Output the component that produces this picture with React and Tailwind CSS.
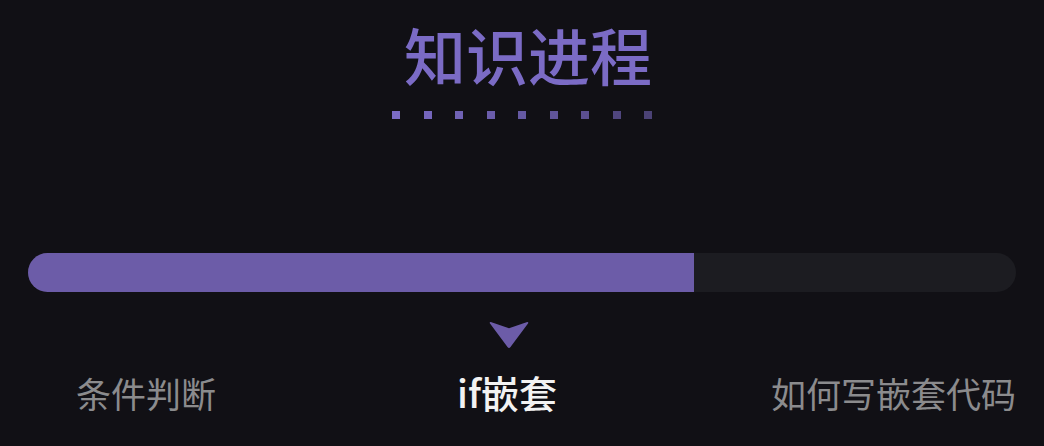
import React from "react";

const DOTS = [
  "opacity-100",
  "opacity-95",
  "opacity-90",
  "opacity-85",
  "opacity-80",
  "opacity-75",
  "opacity-70",
  "opacity-60",
  "opacity-55",
];

const cjk = { fontFamily: '"Noto Sans CJK SC", "Noto Sans", sans-serif' };

const Chevron = () => (
  <svg width="42" height="29" viewBox="0 0 42 29" className="block">
    <path
      d="M2.5 1.2 L20 7.2 L37.5 1.2 Q40 0.5 39 2.6 L21.5 26 Q20 27.8 18.5 26 L1 2.6 Q0 0.5 2.5 1.2 Z"
      fill="#6c5ca8"
    />
  </svg>
);

export default function App() {
  return (
    <div className="h-[446px] w-[1044px] overflow-hidden bg-[#111015]" style={cjk}>
      {/* Title */}
      <div className="flex flex-col items-center pt-[23px]">
        <h1 className="ml-[12px] text-[62px] font-medium leading-none text-[#7b6bc5]">
          知识进程
        </h1>
        <div className="mt-[26px] flex gap-[23.5px]">
          {DOTS.map((o, i) => (
            <span key={i} className={`block h-[8px] w-[8px] bg-[#7b6bc5] ${o}`} />
          ))}
        </div>
      </div>

      {/* Progress bar */}
      <div className="mt-[134px] px-[28px]">
        <div className="h-[39px] w-full overflow-hidden rounded-full bg-[#1c1c21]">
          <div className="h-full w-[666px] bg-[#6c5ca8]" />
        </div>
      </div>

      {/* Marker */}
      <div className="mt-[29px] flex pl-[489px]">
        <Chevron />
      </div>

      {/* Steps */}
      <div className="mt-[23px] flex items-center text-[35px] leading-none">
        <span className="ml-[76px] text-[#8b8b8d]">条件判断</span>
        <span className="ml-[241px] text-[38px] font-medium text-[#f2f2f2]">if嵌套</span>
        <span className="ml-auto mr-[28px] text-[#8b8b8d]">如何写嵌套代码</span>
      </div>
    </div>
  );
}
